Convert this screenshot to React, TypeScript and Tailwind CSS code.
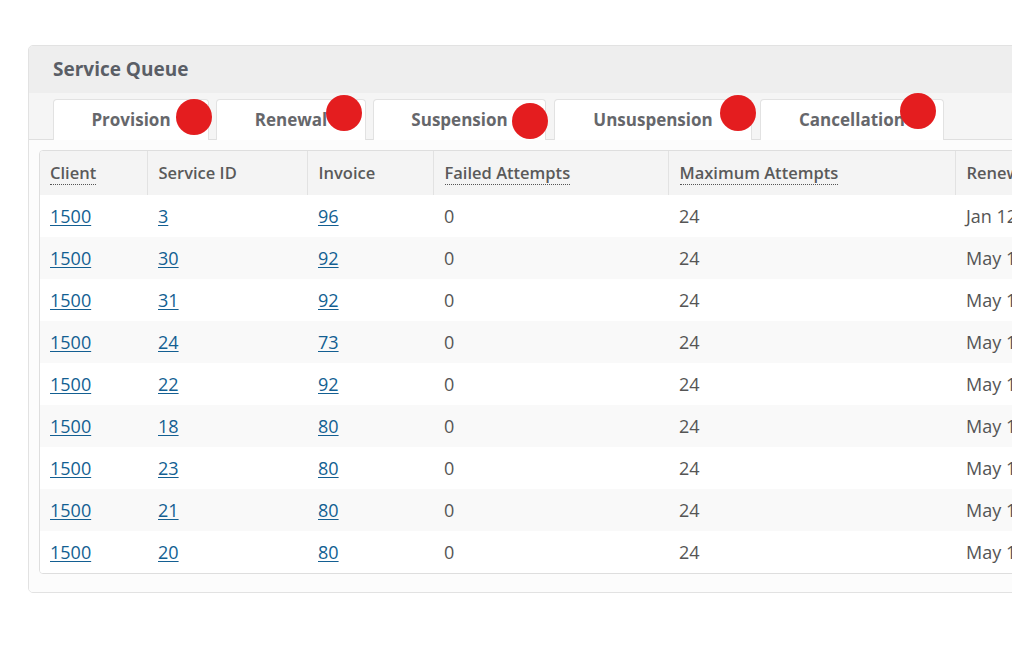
import React from "react";

const tabs = [
  { label: "Provision", w: "w-[156px]" },
  { label: "Renewal", w: "w-[150px]" },
  { label: "Suspension", w: "w-[173px]" },
  { label: "Unsuspension", w: "w-[198px] ml-[1px]" },
  { label: "Cancellation", w: "w-[184px] ml-[1px]" },
];

const rows = [
  ["1500", "3", "96", "0", "24", "Jan 12, 2021"],
  ["1500", "30", "92", "0", "24", "May 15, 2021"],
  ["1500", "31", "92", "0", "24", "May 15, 2021"],
  ["1500", "24", "73", "0", "24", "May 15, 2021"],
  ["1500", "22", "92", "0", "24", "May 15, 2021"],
  ["1500", "18", "80", "0", "24", "May 15, 2021"],
  ["1500", "23", "80", "0", "24", "May 15, 2021"],
  ["1500", "21", "80", "0", "24", "May 15, 2021"],
  ["1500", "20", "80", "0", "24", "May 15, 2021"],
];

const dots = [
  "left-[176px] top-[99px]",
  "left-[326px] top-[95px]",
  "left-[512px] top-[103px]",
  "left-[720px] top-[95px]",
  "left-[900px] top-[93px]",
];

export default function App() {
  return (
    <div
      className="relative w-[1012px] h-[652px] overflow-hidden bg-white text-[#555]"
      style={{ fontFamily: '"Open Sans", "Liberation Sans", sans-serif' }}
    >
      <div className="pt-[45px] pl-[28px]">
        <div className="w-[1100px] rounded-[5px] border border-[#e2e2e2] overflow-hidden">
          <div className="h-[47px] bg-[#eeeeee] flex items-center pl-[24px]">
            <h1 className="text-[19px] font-bold text-[#5a5e66]">Service Queue</h1>
          </div>
          <div className="bg-[#f5f5f5] pt-[6px] pl-[24px] flex gap-[7px] border-b border-[#dfdfdf]">
            {tabs.map((t) => (
              <div
                key={t.label}
                className={`${t.w} h-[41px] -mb-px bg-white border border-[#e2e2e2] border-b-0 rounded-t-[4px] flex items-center justify-center text-[17px] font-bold text-[#66676b]`}
              >
                {t.label}
              </div>
            ))}
          </div>
          <div className="bg-[#fcfcfc] pt-[10px] pl-[10px] pb-[18px]">
            <div className="rounded-[4px] border border-[#dedede] overflow-hidden bg-white">
              <table className="table-fixed border-collapse w-[1060px]">
                <colgroup>
                  <col className="w-[107px]" />
                  <col className="w-[160px]" />
                  <col className="w-[126px]" />
                  <col className="w-[235px]" />
                  <col className="w-[287px]" />
                  <col />
                </colgroup>
                <thead>
                  <tr className="h-[44px] bg-[#f4f4f4] text-left text-[16.5px] font-semibold text-[#5a5a5a]">
                    <th className="pl-[10px] pr-[10px] font-semibold">
                      <span className="border-b border-dotted border-[#555]">Client</span>
                    </th>
                    <th className="pl-[11px] pr-[10px] font-semibold border-l border-[#e2e2e2]">Service ID</th>
                    <th className="pl-[11px] pr-[10px] font-semibold border-l border-[#e2e2e2]">Invoice</th>
                    <th className="pl-[11px] pr-[10px] font-semibold border-l border-[#e2e2e2]">
                      <span className="border-b border-dotted border-[#555]">Failed Attempts</span>
                    </th>
                    <th className="pl-[11px] pr-[10px] font-semibold border-l border-[#e2e2e2]">
                      <span className="border-b border-dotted border-[#555]">Maximum Attempts</span>
                    </th>
                    <th className="pl-[11px] pr-[10px] font-semibold border-l border-[#e2e2e2] whitespace-nowrap overflow-hidden">
                      Renew Date
                    </th>
                  </tr>
                </thead>
                <tbody>
                  {rows.map((r, i) => (
                    <tr
                      key={i}
                      className={`h-[42px] text-[18px] ${i % 2 === 1 ? "bg-[#f9f9f9]" : "bg-white"}`}
                    >
                      <td className="pl-[10px] pr-[10px]">
                        <a href="#" className="text-[#135f92] underline underline-offset-2">{r[0]}</a>
                      </td>
                      <td className="pl-[11px] pr-[10px]">
                        <a href="#" className="text-[#135f92] underline underline-offset-2">{r[1]}</a>
                      </td>
                      <td className="pl-[11px] pr-[10px]">
                        <a href="#" className="text-[#135f92] underline underline-offset-2">{r[2]}</a>
                      </td>
                      <td className="pl-[11px] pr-[10px]">{r[3]}</td>
                      <td className="pl-[11px] pr-[10px]">{r[4]}</td>
                      <td className="pl-[11px] pr-[10px] whitespace-nowrap">{r[5]}</td>
                    </tr>
                  ))}
                </tbody>
              </table>
            </div>
          </div>
        </div>
      </div>
      {dots.map((d) => (
        <div key={d} className={`absolute ${d} w-[36px] h-[36px] rounded-full bg-[#e41d1f]`} />
      ))}
    </div>
  );
}
